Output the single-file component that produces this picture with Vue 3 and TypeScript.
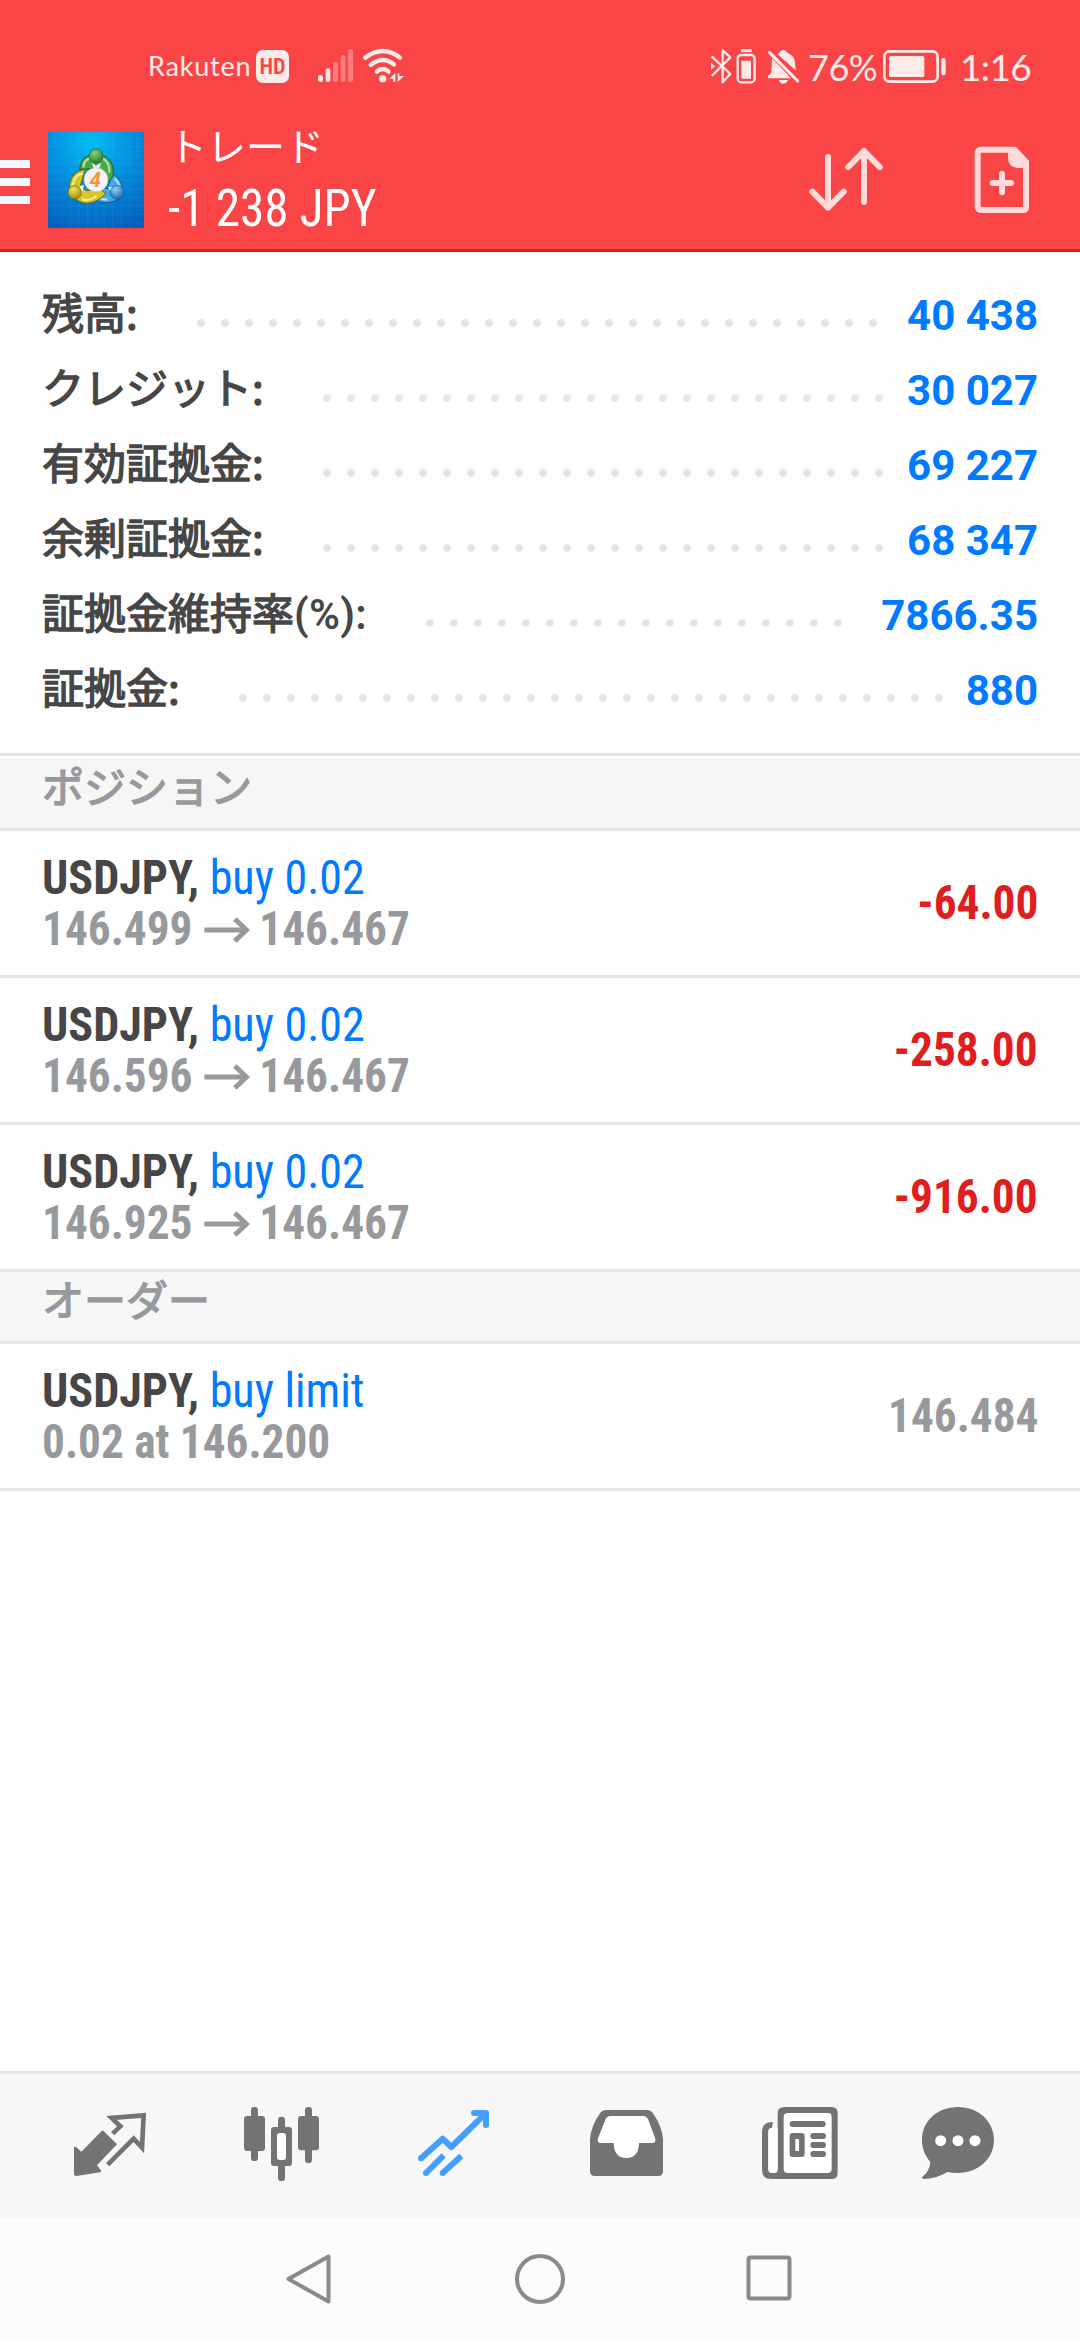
<script setup lang="ts">
interface BalanceRow {
  label: string
  suffix?: string
  value: string
  dots: number
}

interface Position {
  symbol: string
  side: string
  open: string
  current: string
  profit: string
}

const DOT_PITCH = 24

const balance: BalanceRow[] = [
  { label: '残高:', value: '40 438', dots: 29 },
  { label: 'クレジット:', value: '30 027', dots: 24 },
  { label: '有効証拠金:', value: '69 227', dots: 24 },
  { label: '余剰証拠金:', value: '68 347', dots: 24 },
  { label: '証拠金維持率', suffix: '(%):', value: '7866.35', dots: 18 },
  { label: '証拠金:', value: '880', dots: 30 },
]

const positions: Position[] = [
  { symbol: 'USDJPY,', side: 'buy 0.02', open: '146.499', current: '146.467', profit: '-64.00' },
  { symbol: 'USDJPY,', side: 'buy 0.02', open: '146.596', current: '146.467', profit: '-258.00' },
  { symbol: 'USDJPY,', side: 'buy 0.02', open: '146.925', current: '146.467', profit: '-916.00' },
]
</script>

<template>
  <div class="screen">
    <div class="top">
      <div class="status">
        <span class="carrier">Rakuten</span>
        <span class="hd">HD</span>
        <svg class="radio" width="141" height="70" viewBox="477 0 423 210" fill="#ffeaea">
          <rect x="564" y="135" width="15" height="21" rx="7" />
          <rect x="587" y="115" width="14" height="41" rx="6" />
          <g fill="#ff7c7e">
            <rect x="609" y="95" width="15" height="61" rx="6" />
            <rect x="632" y="75" width="14" height="81" rx="6" />
            <rect x="654" y="57" width="15" height="99" rx="6" />
          </g>
          <g fill="none" stroke="#ffeaea" stroke-width="13" stroke-linecap="round">
            <path d="M706 83Q758 43 810 83" />
            <path d="M722 105Q758 76 792 103" />
            <path d="M740 125Q758 109 776 125" />
          </g>
          <circle cx="758" cy="146" r="11" />
          <path d="M796 129V156H790V146H778ZM803 156V130H808V138H822Z" />
        </svg>
        <span class="grow"></span>
        <svg width="117" height="70" viewBox="0 0 351 210" fill="none" stroke="#ffeaea" stroke-width="7">
          <path d="M65 79L121 132L98 157V61L121 82L65 138" stroke-linejoin="round" />
          <path d="M63 98L75 109L63 120Z" fill="#ffeaea" stroke="none" />
          <rect x="143" y="75" width="51" height="82" rx="11" />
          <rect x="154" y="92" width="29" height="54" rx="3" fill="#ffeaea" stroke="none" />
          <path d="M153 62H185" stroke-width="9" />
          <g fill="#ffeaea" stroke="none">
            <path d="M262 72Q270 68 271 64Q280 55 289 64Q290 68 297 71Q314 79 315 100L317 121Z" />
            <path d="M246 84L303 145H234V137Q245 131 245 117Z" />
            <path d="M266 150H294Q290 161 280 161Q270 161 266 150Z" />
          </g>
          <path d="M239 68L323 153" stroke-width="9" stroke-linecap="round" />
        </svg>
        <span class="pct">76%</span>
        <svg class="battery" width="80" height="70" viewBox="570 0 240 210" fill="#ffeaea">
          <rect x="583" y="64" width="160" height="91" rx="16" fill="none" stroke="#ffeaea" stroke-width="8" />
          <rect x="597" y="78" width="106" height="63" rx="5" />
          <rect x="754" y="84" width="13" height="52" rx="6" />
        </svg>
        <span class="clock">1:16</span>
      </div>
      <div class="bar">
        <div class="menu"><i></i><i></i><i></i></div>
        <svg class="logo" width="96" height="96" viewBox="144 66 288 288">
          <defs>
            <radialGradient id="bg" cx=".45" cy=".1" r=".95">
              <stop offset="0" stop-color="#04bdf2" />
              <stop offset=".45" stop-color="#0490e0" />
              <stop offset="1" stop-color="#0361bb" />
            </radialGradient>
            <radialGradient id="gr" cx=".4" cy=".3" r=".75">
              <stop offset="0" stop-color="#8fcf7c" />
              <stop offset="1" stop-color="#1d7d30" />
            </radialGradient>
            <radialGradient id="ye" cx=".4" cy=".3" r=".75">
              <stop offset="0" stop-color="#f0e55a" />
              <stop offset="1" stop-color="#9c8a10" />
            </radialGradient>
            <radialGradient id="bl" cx=".4" cy=".3" r=".75">
              <stop offset="0" stop-color="#8fd2f8" />
              <stop offset="1" stop-color="#1262a8" />
            </radialGradient>
          </defs>
          <rect x="144" y="66" width="288" height="288" fill="url(#bg)" />
          <path d="M162 66V354M187 66V354M212 66V354M237 66V354M263 66V354M288 66V354M313 66V354M338 66V354M364 66V354M389 66V354M414 66V354M144 85H432M144 110H432M144 136H432M144 161H432M144 186H432M144 212H432M144 237H432M144 262H432M144 288H432M144 313H432M144 338H432" stroke="#5cc4ff" stroke-opacity=".2" stroke-width="2" />
          <path d="M338 192Q366 208 368 238Q372 272 324 278Q290 280 272 256Q262 240 268 228L322 236Z" fill="#4aa7e6" stroke="#0d568f" stroke-width="3" />
          <path d="M344 205Q360 220 358 240M280 250Q296 270 322 268" fill="none" stroke="#b4e2ff" stroke-width="6" />
          <path d="M239 178Q240 142 275 134H302Q342 146 340 186Q340 208 322 214L288 176Z" fill="#49a84a" stroke="#1d5f28" stroke-width="3" />
          <path d="M250 172Q252 150 270 144M310 146Q330 160 328 188" fill="none" stroke="#b2e5a0" stroke-width="6" />
          <path d="M256 178Q220 182 210 218Q204 238 215 250Q232 280 260 280Q294 278 318 250L300 238L260 242L240 230Z" fill="#d5c62d" stroke="#6b6412" stroke-width="3" />
          <path d="M218 226Q222 196 248 190M246 268Q270 274 290 258" fill="none" stroke="#f8f28c" stroke-width="6" />
          <path d="M275 158L288 168L303 158L297 176H282ZM238 228L252 226L246 248ZM324 230L338 232L332 246Z" fill="#fff" />
          <circle cx="288" cy="138" r="21" fill="url(#gr)" stroke="#236b2b" stroke-width="2" />
          <circle cx="224" cy="247" r="20" fill="url(#ye)" stroke="#776b10" stroke-width="2" />
          <circle cx="351" cy="247" r="21" fill="url(#bl)" stroke="#145b98" stroke-width="2" />
          <circle cx="288" cy="209" r="36" fill="#f3f3f3" stroke="#bdbdb0" stroke-width="2" />
          <text x="286" y="231" class="four">4</text>
        </svg>
        <div class="titles">
          <span class="title">トレード</span>
          <span class="total">-1 238 JPY</span>
        </div>
        <svg width="150" height="139" viewBox="0 0 450 417" fill="none" stroke="#ffdada" stroke-width="18" stroke-linecap="round" stroke-linejoin="round">
          <path d="M144 141V293M97 245L144 293L191 245M252 276V123M205 171L252 123L299 171" />
        </svg>
        <svg width="150" height="139" viewBox="450 0 450 417" fill="none" stroke="#ffdada" stroke-width="18">
          <path d="M704 119H604Q593 119 593 130V289Q593 300 604 300H728Q738 300 738 290V156Z" stroke-linejoin="round" />
          <path d="M684 120H707L747 154V174H716Q684 174 684 140Z" fill="#ffdada" stroke="none" />
          <path d="M638 219H693M666 191V247" stroke-linecap="round" />
        </svg>
      </div>
    </div>

    <div class="balance">
      <div v-for="row in balance" :key="row.label" class="brow">
        <span class="blabel">{{ row.label }}<span v-if="row.suffix" class="suffix">{{ row.suffix }}</span></span>
        <span class="dots" :style="{ width: row.dots * DOT_PITCH + 'px' }"></span>
        <span class="bvalue">{{ row.value }}</span>
      </div>
    </div>

    <div class="section first">ポジション</div>
    <div v-for="p in positions" :key="p.open" class="deal">
      <div class="info">
        <div class="line symbol"><b>{{ p.symbol }}</b> <span class="side">{{ p.side }}</span></div>
        <div class="line prices">
          <span>{{ p.open }}</span>
          <svg class="arrow" width="49" height="26" viewBox="0 0 46 26" preserveAspectRatio="none" fill="none" stroke="#98999d" stroke-width="5">
            <path d="M0 13H43M30.500 2L42 13L30.500 24" />
          </svg>
          <span>{{ p.current }}</span>
        </div>
      </div>
      <div class="profit">{{ p.profit }}</div>
    </div>

    <div class="section">オーダー</div>
    <div class="deal">
      <div class="info">
        <div class="line symbol"><b>USDJPY,</b> <span class="side">buy limit</span></div>
        <div class="line prices">0.02 at 146.200</div>
      </div>
      <div class="profit muted">146.484</div>
    </div>

    <div class="filler"></div>

    <div class="tabs">
      <svg viewBox="-48 72 516 432" fill="#737373">
        <path d="M190 242L231 283L171 346L184 362Q184 366 180 367L110 378Q102 378 102 370V292Q104 289 108 291L124 305L183 245Q187 241 190 242Z" />
        <path d="M218 251L241 229L215 204L311 196L306 293L281 266L203 344" fill="none" stroke="#737373" stroke-width="14" />
      </svg>
      <svg viewBox="468 72 516 432" fill="#737373">
        <rect x="633" y="171" width="21" height="162" rx="10" />
        <rect x="612" y="198" width="63" height="105" rx="9" />
        <rect x="795" y="171" width="21" height="168" rx="10" />
        <rect x="774" y="198" width="63" height="103" rx="9" />
        <rect x="714" y="200" width="21" height="193" rx="10" />
        <rect x="693" y="231" width="63" height="117" rx="9" />
        <rect x="711" y="249" width="27" height="81" rx="8" fill="#fff" />
      </svg>
      <svg viewBox="984 72 516 432" fill="none" stroke="#459dff" stroke-width="18">
        <path d="M1143 325L1208 266L1234 291L1336 191M1302 189H1338V225M1158 369L1211 316M1208 369L1264 318" stroke-linejoin="round" />
        <g fill="#459dff" stroke="none">
          <circle cx="1143" cy="325" r="9" /><circle cx="1302" cy="189" r="9" /><circle cx="1338" cy="225" r="9" />
          <circle cx="1158" cy="369" r="9" /><circle cx="1208" cy="369" r="9" />
        </g>
      </svg>
      <svg viewBox="0 72 516 432" fill="#737373">
        <path d="M198 180H322Q332 180 338 188Q367 230 369 268V363Q369 378 354 378H165Q150 378 150 363V268Q152 230 181 188Q187 180 198 180Z" />
        <path d="M212 198H308Q319 198 324 207L346 266Q348 279 337 279H297Q296 324 259 324Q222 324 221 279H182Q170 279 174 265L197 207Q202 198 212 198Z" fill="#fff" />
      </svg>
      <svg viewBox="516 72 516 432" fill="#737373">
        <path d="M733 171H875Q893 171 893 189V368Q893 387 875 387H694Q666 387 666 359V245Q666 216 699 216L696 233Q685 233 685 245V358Q685 369 697 369H703Q713 369 713 358V189Q713 171 733 171Z" />
        <path d="M685 245Q685 234 696 234H713V358Q713 369 703 369H697Q685 369 685 358Z" fill="#fff" />
        <rect x="731" y="189" width="144" height="180" rx="12" fill="#fff" />
        <rect x="749" y="213" width="108" height="18" rx="9" />
        <rect x="749" y="249" width="45" height="72" rx="9" />
        <rect x="766" y="267" width="11" height="36" fill="#fff" />
        <rect x="811" y="249" width="47" height="18" rx="9" />
        <rect x="811" y="276" width="47" height="18" rx="9" />
        <rect x="811" y="303" width="47" height="18" rx="9" />
      </svg>
      <svg viewBox="1032 72 516 432" fill="#737373">
        <path d="M1254 171C1316 171 1362 215 1362 270C1362 326 1314 369 1254 369Q1238 369 1222 366Q1188 387 1151 387Q1143 385 1149 379Q1169 363 1171 336C1154 315 1146 295 1146 270C1146 213 1192 171 1254 171Z" />
        <g fill="#fff">
          <circle cx="1202" cy="272" r="16.500" /><circle cx="1254" cy="272" r="16.500" /><circle cx="1305" cy="272" r="16.500" />
        </g>
      </svg>
    </div>

    <div class="nav">
      <svg width="60" height="60" viewBox="0 0 60 60"><path d="M48.500 7.500V52.500L8.500 30Z" /></svg>
      <svg width="60" height="60" viewBox="0 0 60 60"><circle cx="30" cy="30" r="23" /></svg>
      <svg width="60" height="60" viewBox="0 0 60 60"><rect x="8.500" y="8.500" width="41" height="41" rx="2" /></svg>
    </div>
  </div>
</template>

<style>
body {
  margin: 0;
  background: #fff;
}
</style>

<style scoped>
.screen {
  width: 1080px;
  height: 2340px;
  display: flex;
  flex-direction: column;
  background: #fefefe;
  font-family: "Roboto", sans-serif;
  overflow: hidden;
}
svg {
  display: block;
  flex: none;
}
.top {
  height: 249px;
  background: #fa4547;
  border-bottom: 3px solid #d8201f;
}
.status {
  display: flex;
  align-items: center;
  height: 70px;
  padding: 30px 0 10px 148px;
  color: #ffeaea;
  font-family: "Lato", sans-serif;
  line-height: 70px;
  white-space: nowrap;
}
.carrier {
  width: 108px;
  font-size: 27px;
  letter-spacing: 0.8px;
  padding-top: 2px;
  box-sizing: border-box;
}
.hd {
  width: 33px;
  height: 33px;
  margin-top: 3px;
  border-radius: 7px;
  background: #ffeaea;
  color: #fa4547;
  font: 600 22px/34px "Roboto", sans-serif;
  font-stretch: 75%;
  text-align: center;
}
.grow {
  flex: 1;
}
.pct {
  width: 73px;
  font-size: 36px;
  padding: 3px 0 0 1px;
  box-sizing: border-box;
  letter-spacing: -0.5px;
}
.clock {
  width: 120px;
  font-size: 37px;
  padding-top: 3px;
  box-sizing: border-box;
  letter-spacing: -0.6px;
}
.bar {
  display: flex;
  align-items: center;
  height: 139px;
}
.menu {
  display: flex;
  flex-direction: column;
  gap: 10px;
  width: 30px;
  padding-top: 5px;
  margin-right: 18px;
}
.menu i {
  height: 8px;
  background: #eff7ff;
}
.logo {
  margin-top: 1px;
}
.four {
  font: italic bold 62px "Roboto", sans-serif;
  fill: #f0923a;
  text-anchor: middle;
}
.titles {
  display: flex;
  flex-direction: column;
  flex: 1;
  height: 139px;
  padding-left: 24px;
  color: #fff;
  white-space: nowrap;
}
.title {
  font: 39px/62px "Noto Sans CJK JP", sans-serif;
  height: 62px;
  padding-top: 3px;
}
.total {
  font-family: "Roboto Condensed", "Roboto", sans-serif;
  font-stretch: 75%;
  font-size: 51px;
  font-weight: 450;
  line-height: 60px;
  transform: scaleX(0.963);
  transform-origin: left;
  padding-top: 4px;
}
.balance {
  height: 450px;
  padding: 26px 42px 25px;
  border-bottom: 3px solid #e4e4e4;
}
.brow {
  display: flex;
  align-items: baseline;
  height: 75px;
}
.blabel {
  font: 400 42px/67px "Noto Sans CJK JP", sans-serif;
  -webkit-text-stroke: 1.4px #464646;
  color: #464646;
  white-space: nowrap;
  transform: translateY(-1px);
}
.suffix {
  font-family: "Roboto", sans-serif;
  font-weight: 600;
  letter-spacing: 0.3px;
  -webkit-text-stroke: 0;
}
.dots {
  align-self: flex-start;
  height: 8px;
  margin: 41px 0 0 51px;
  background: radial-gradient(circle at 12px 4px, #e4e4e4 3.400px, transparent 4.200px) 0 0 / 24px 8px repeat-x;
}
.bvalue {
  margin-left: auto;
  font-size: 42px;
  font-weight: 700;
  line-height: 75px;
  color: #007aff;
  white-space: nowrap;
}
.section {
  height: 69px;
  padding-left: 42px;
  background: #f6f6f6;
  border-bottom: 3px solid #e4e4e4;
  font: 400 42px/51px "Noto Sans CJK JP", sans-serif;
  -webkit-text-stroke: 1.4px #98999d;
  color: #98999d;
}
.first {
  margin-top: 3px;
}
.deal {
  display: flex;
  align-items: center;
  justify-content: space-between;
  height: 144px;
  padding: 0 42px;
  border-bottom: 3px solid #e4e4e4;
  font-family: "Roboto Condensed", "Roboto", sans-serif;
  font-stretch: 75%;
  font-size: 48px;
  line-height: 51px;
  white-space: nowrap;
}
.line {
  height: 51px;
  color: #464646;
  transform-origin: left;
}
.symbol {
  transform: scaleX(0.96);
}
.side {
  color: #007aff;
}
.prices {
  display: flex;
  align-items: center;
  font-weight: 700;
  color: #98999d;
  transform: scaleX(0.943);
}
.arrow {
  margin: 2px 10px 0 12px;
}
.profit {
  margin-top: -2px;
  font-weight: 700;
  color: #df1f1f;
  transform: scaleX(0.943);
  transform-origin: right;
}
.profit.muted {
  color: #98999d;
}
.filler {
  flex: 1;
}
.tabs {
  display: flex;
  height: 144px;
  padding: 0 24px;
  background: #f7f7f7;
  border-top: 3px solid #e4e4e4;
}
.tabs svg {
  width: 172px;
  height: 144px;
}
.nav {
  display: flex;
  justify-content: center;
  align-items: center;
  gap: 170px;
  height: 122px;
  background: #fcfcfc;
}
.nav svg {
  fill: none;
  stroke: #8a8a8a;
  stroke-width: 4;
  stroke-linejoin: round;
}
</style>
